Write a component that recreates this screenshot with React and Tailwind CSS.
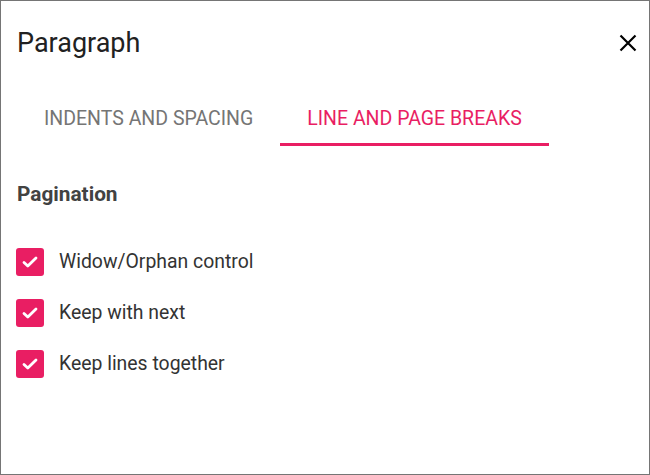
import { useState } from 'react';

const OPTIONS = ['Widow/Orphan control', 'Keep with next', 'Keep lines together'];

function CheckIcon() {
  return (
    <svg className="w-[18px] h-[18px]" viewBox="0 0 18 18" fill="none">
      <path d="M3 9.5l3.8 3.6L15 5" stroke="white" strokeWidth={2.8} strokeLinecap="round" strokeLinejoin="round" />
    </svg>
  );
}

export default function App() {
  const [tab, setTab] = useState(1);
  const [checked, setChecked] = useState([true, true, true]);

  const toggle = (i) => setChecked(c => c.map((v, j) => (j === i ? !v : v)));

  return (
    <div
      className="w-[650px] h-[475px] border border-[#757575] bg-white flex flex-col"
      style={{ fontFamily: 'Roboto, "Liberation Sans", sans-serif' }}
    >
      <div className="flex items-center justify-between pl-[16px] pr-[7px] h-[84px]">
        <h2 className="text-[27px] text-[#212121] leading-none">Paragraph</h2>
        <button className="w-[28px] h-[28px] flex items-center justify-center">
          <svg className="w-[18px] h-[18px]" viewBox="0 0 18 18" fill="none">
            <path d="M1.5 1.5l15 15M16.5 1.5l-15 15" stroke="black" strokeWidth={2.2} />
          </svg>
        </button>
      </div>

      <div className="flex pl-[16px]">
        {['INDENTS AND SPACING', 'LINE AND PAGE BREAKS'].map((t, i) => (
          <button
            key={t}
            onClick={() => setTab(i)}
            className={`relative h-[61px] pt-[7px] px-[27px] text-[19.5px] leading-none ${
              tab === i ? 'text-[#e91e63]' : 'text-[#757575]'
            }`}
          >
            {t}
            {tab === i && <span className="absolute left-0 right-0 bottom-0 h-[3px] bg-[#e91e63]" />}
          </button>
        ))}
      </div>

      <div className="px-[16px] pt-[38px]">
        <h3 className="text-[20.8px] font-bold text-[#424242] leading-none">Pagination</h3>
        <div className="flex flex-col gap-[23px] mt-[43px]">
          {OPTIONS.map((o, i) => (
            <label key={o} className="flex items-center gap-[15px] cursor-pointer" onClick={() => toggle(i)}>
              <span
                className={`-ml-[1px] w-[28px] h-[28px] rounded-[3px] flex items-center justify-center ${
                  checked[i] ? 'bg-[#e91e63]' : 'border-2 border-[#757575]'
                }`}
              >
                {checked[i] && <CheckIcon />}
              </span>
              <span className="text-[19.4px] leading-none text-[#333333]">{o}</span>
            </label>
          ))}
        </div>
      </div>
    </div>
  );
}
